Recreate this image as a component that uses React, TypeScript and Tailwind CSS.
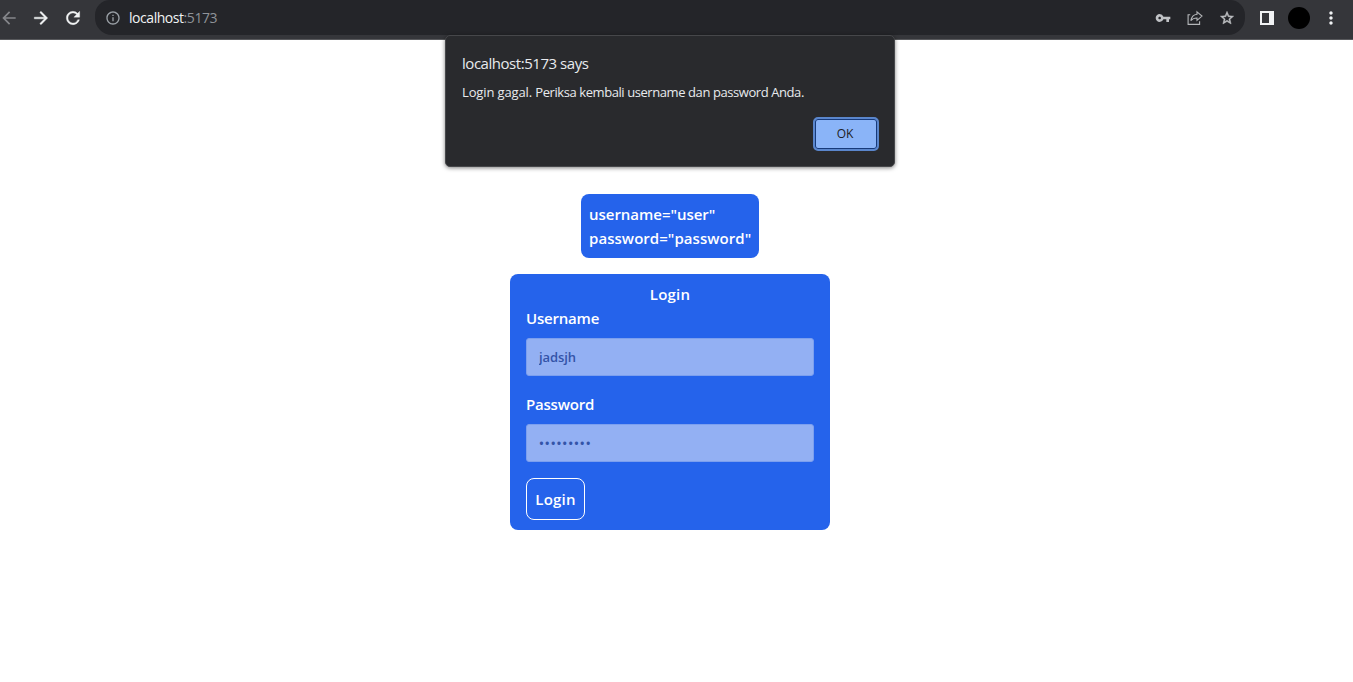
import { useState } from "react";
import type { FormEvent } from "react";
import { MdArrowBack, MdInfoOutline, MdMoreVert, MdVpnKey } from "react-icons/md";

function ForwardIcon() {
  return (
    <svg
      className="ml-3 h-5 w-5"
      viewBox="0 0 24 24"
      fill="currentColor"
      stroke="currentColor"
      strokeWidth="0.5"
    >
      <path d="M12 4l-1.41 1.41L16.17 11H4v2h12.17l-5.58 5.59L12 20l8-8z" />
    </svg>
  );
}

function ReloadIcon() {
  return (
    <svg
      className="ml-3 h-5 w-5"
      viewBox="0 0 24 24"
      fill="currentColor"
      stroke="currentColor"
      strokeWidth="0.4"
    >
      <path d="M17.65 6.35A7.958 7.958 0 0012 4c-4.42 0-7.99 3.58-7.99 8s3.57 8 7.99 8c3.73 0 6.84-2.55 7.73-6h-2.08A5.99 5.99 0 0112 18c-3.31 0-6-2.69-6-6s2.69-6 6-6c1.66 0 3.14.69 4.22 1.78L13 11h7V4l-2.35 2.35z" />
    </svg>
  );
}

function StarIcon() {
  return (
    <svg
      className="h-4 w-4"
      viewBox="0 0 24 24"
      fill="currentColor"
      stroke="currentColor"
      strokeWidth="0.7"
    >
      <path d="M22 9.24l-7.19-.62L12 2 9.19 8.63 2 9.24l5.46 4.73L5.82 21 12 17.27 18.18 21l-1.63-7.03L22 9.24zM12 15.4l-3.76 2.27 1-4.28-3.32-2.88 4.38-.38L12 6.1l1.71 4.04 4.38.38-3.32 2.88 1 4.28L12 15.4z" />
    </svg>
  );
}

function ShareIcon() {
  return (
    <svg
      className="h-4 w-4"
      viewBox="0 0 16 16"
      fill="none"
      stroke="#b4b6b9"
      strokeWidth="1.1"
    >
      <path d="M3.2 4.8H1.1V14.4H12.6V11.2" />
      <path d="M10 1.8L15 6.1L10 10.4V8C7.2 8 5.4 8.7 3.8 10.7C4.4 7.2 6.3 4.7 10 4.2Z" />
    </svg>
  );
}

function SidePanelIcon() {
  return (
    <svg className="h-[14px] w-[14px]" viewBox="0 0 14 14">
      <path fill="#f1f3f4" fillRule="evenodd" d="M0 0H14V14H0ZM2 2V12H9V2Z" />
    </svg>
  );
}

function Toolbar() {
  return (
    <header className="flex h-10 items-start border-b border-[#58595c] bg-[#35363a]">
      <div className="flex h-9 w-[95px] shrink-0 items-center text-[#f1f3f4]">
        <MdArrowBack className="-ml-[1px] h-5 w-5 text-[#85868a]" />
        <ForwardIcon />
        <ReloadIcon />
      </div>
      <div className="flex h-[35px] w-[1150px] items-center rounded-b-[17px] rounded-t-[15px] bg-[#242529] pt-px">
        <MdInfoOutline className="ml-[10px] h-4 w-4 text-[#9aa0a6]" />
        <p className="ml-2 text-[14px] leading-5 tracking-[-0.45px] text-[#8f9398]">
          <span className="text-[#f1f3f4]">localhost</span>:5173
        </p>
        <div className="ml-auto mr-[10px] flex items-center gap-4 text-[#c0c2c5]">
          <MdVpnKey className="h-4 w-4" />
          <ShareIcon />
          <StarIcon />
        </div>
      </div>
      <div className="flex h-9 items-center text-[#f1f3f4]">
        <div className="ml-[15px]">
          <SidePanelIcon />
        </div>
        <div className="ml-[14px] h-[22px] w-[22px] rounded-full bg-black" />
        <MdMoreVert className="ml-[11px] h-5 w-5" />
      </div>
    </header>
  );
}

function AlertDialog({ onClose }: { onClose: () => void }) {
  return (
    <div
      role="alertdialog"
      className="absolute left-[445px] top-[35px] flex h-[132px] w-[450px] flex-col rounded-[5px] border border-[#46474a] bg-[#292a2d] pl-4 pr-[15px] pt-4 text-[#e8eaed] shadow-[0_1px_4px_rgba(0,0,0,0.5)]"
    >
      <h2 className="text-[15px] leading-[22px] tracking-[-0.46px]">localhost:5173 says</h2>
      <p className="mt-2 whitespace-nowrap text-[13px] leading-5">
        <span className="tracking-[-0.13px]">Login gagal. </span>
        <span className="tracking-[-0.42px]">Periksa kembali username dan password Anda.</span>
      </p>
      <button
        onClick={onClose}
        className="mt-[15px] flex h-[34px] w-[66px] items-center justify-center self-end rounded-[5px] border-2 border-[#5a86cc] bg-[#8ab4f8] pr-0.5 text-[12px] text-[#202124] shadow-[inset_0_0_0_1px_#173a7a]"
      >
        OK
      </button>
    </div>
  );
}

type FieldProps = {
  label: string;
  type: string;
  value: string;
  inputClass: string;
};

function Field({ label, type, value, inputClass }: FieldProps) {
  return (
    <label className="mb-4 flex flex-col text-[15px] font-semibold leading-6 tracking-[-0.2px] text-white">
      {label}
      <input
        type={type}
        defaultValue={value}
        className={`mt-2 h-[38px] rounded-[3px] border border-[#7c9fee] bg-[#93b0f3] px-3 text-[13px] font-semibold text-[#3454a8] outline-none ${inputClass}`}
      />
    </label>
  );
}

export default function App() {
  const [alertOpen, setAlertOpen] = useState(true);

  const submit = (event: FormEvent) => {
    event.preventDefault();
    setAlertOpen(true);
  };

  return (
    <div className="relative h-[682px] w-[1353px] overflow-hidden bg-white font-['Open_Sans','Noto_Sans',sans-serif]">
      <Toolbar />
      <main className="flex w-[1340px] flex-col items-center pt-[154px]">
        <div className="w-[178px] whitespace-nowrap rounded-lg bg-[#2563eb] p-2 text-[15px] font-semibold leading-6 text-white">
          <p className="tracking-[-0.03px]">username="user"</p>
          <p className="tracking-[0.05px]">password="password"</p>
        </div>
        <form
          onSubmit={submit}
          className="mt-4 flex h-64 w-80 flex-col rounded-lg bg-[#2563eb] px-4 pt-2"
        >
          <h1 className="text-center text-[15px] font-semibold leading-6 tracking-[0.2px] text-white">
            Login
          </h1>
          <Field label="Username" type="text" value="jadsjh" inputClass="tracking-[-0.1px]" />
          <Field
            label="Password"
            type="password"
            value="jadsjh123"
            inputClass="tracking-[0.95px]"
          />
          <button className="flex h-[42px] w-[59px] items-center justify-center rounded-lg border border-white text-[15px] font-semibold tracking-[0.2px] text-white">
            Login
          </button>
        </form>
      </main>
      {alertOpen && <AlertDialog onClose={() => setAlertOpen(false)} />}
    </div>
  );
}
